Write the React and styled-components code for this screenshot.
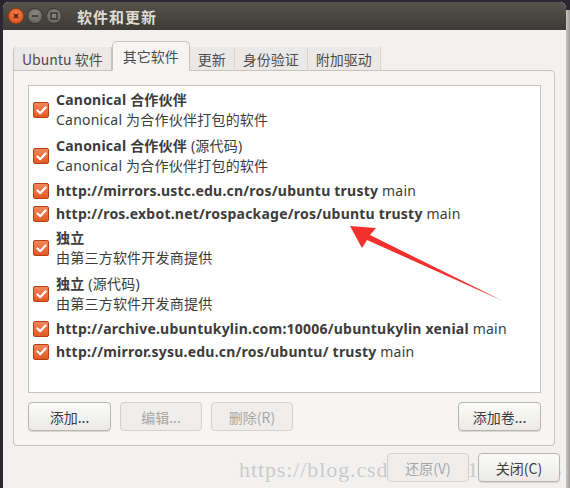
import React from "react";
import styled, { createGlobalStyle } from "styled-components";

const GlobalStyle = createGlobalStyle`
  html, body {
    margin: 0;
    padding: 0;
    background: #2b2631;
    width: 570px;
    height: 488px;
    overflow: hidden;
  }
  body {
    font-family: "Noto Sans", "Noto Sans CJK SC", sans-serif;
    font-size: 14px;
    color: #3c3c3c;
  }
`;

const Screen = styled.div`
  position: relative;
  width: 570px;
  height: 488px;
  padding-top: 2px;
  padding-left: 3px;
  box-sizing: border-box;
  display: flex;
`;

const Window = styled.div`
  width: 563px;
  display: flex;
  flex-direction: column;
  background: #f2f1f0;
  border-radius: 6px 6px 0 0;
  overflow: hidden;
`;

const TitleBar = styled.div`
  height: 28px;
  flex: none;
  display: flex;
  align-items: center;
  padding-left: 5px;
  gap: 3px;
  background: linear-gradient(#56534c, #3d3b36);
`;

const WinButton = styled.span`
  width: 16px;
  height: 16px;
  border-radius: 50%;
  box-sizing: border-box;
  display: flex;
  align-items: center;
  justify-content: center;
  background: ${(p) =>
    p.$close
      ? "radial-gradient(circle at 50% 35%, #f47d4f, #dd4814)"
      : "radial-gradient(circle at 50% 35%, #8a877f, #5f5c55)"};
  border: 1px solid ${(p) => (p.$close ? "#a63a12" : "#3a3833")};
  margin-right: ${(p) => (p.$last ? "12px" : "0")};
`;

const Title = styled.span`
  color: #dfdbd2;
  font-weight: bold;
  font-size: 15px;
  font-family: "Noto Sans CJK SC", sans-serif;
  letter-spacing: 1px;
`;

const Body = styled.div`
  flex: 1;
  display: flex;
  flex-direction: column;
  padding: 12px 11px 0 10px;
`;

const TabStrip = styled.div`
  display: flex;
  align-items: flex-end;
  height: 29px;
  position: relative;
  z-index: 1;
  margin-bottom: -1px;
`;

const Tab = styled.div`
  height: ${(p) => (p.$active ? "30px" : "24px")};
  box-sizing: border-box;
  padding: 0 ${(p) => (p.$active ? "10px" : "8px")};
  display: flex;
  align-items: center;
  font-size: 14px;
  color: #4c4c4c;
  font-family: "Noto Sans CJK SC", sans-serif;
  background: ${(p) => (p.$active ? "#f6f5f4" : "#ebe9e7")};
  border: 1px solid #c6c3bf;
  border-bottom: ${(p) => (p.$active ? "1px solid #f6f5f4" : "1px solid #c6c3bf")};
  border-left: ${(p) => (p.$first || p.$active ? "1px solid #c6c3bf" : "none")};
  border-right: ${(p) => (p.$prevActive ? "1px solid #c6c3bf" : "1px solid #d8d5d2")};
  border-top: ${(p) => (p.$active ? "1px solid #c6c3bf" : "none")};
  border-radius: ${(p) => (p.$active ? "5px 5px 0 0" : p.$first ? "4px 0 0 0" : "0")};
  ${(p) => p.$active && "border-right: 1px solid #c6c3bf;"}
`;

const Panel = styled.div`
  height: 376px;
  box-sizing: border-box;
  border: 1px solid #c6c3bf;
  border-radius: 0 4px 4px 4px;
  background: #f6f5f4;
  padding: 14px 13px 0 14px;
  display: flex;
  flex-direction: column;
`;

const ListBox = styled.div`
  height: 308px;
  box-sizing: border-box;
  background: #ffffff;
  border: 1px solid #c6c3bf;
  padding-top: 1px;
  display: flex;
  flex-direction: column;
`;

const Row = styled.div`
  height: ${(p) => (p.$double ? "46px" : "23px")};
  display: flex;
  align-items: center;
  padding-left: 4px;
  gap: 7px;
`;

const Check = styled.span`
  width: 16px;
  height: 16px;
  flex: none;
  box-sizing: border-box;
  border-radius: 2px;
  border: 1px solid #b8400f;
  background: linear-gradient(#f2875a, #e05a24);
  display: flex;
  align-items: center;
  justify-content: center;
`;

const Lines = styled.div`
  display: flex;
  flex-direction: column;
  line-height: 20px;
  white-space: nowrap;
  letter-spacing: 0.22px;
`;

const Strong = styled.span`
  font-weight: bold;
  color: #3c3c3c;
`;

const Plain = styled.span`
  font-weight: normal;
  color: #3c3c3c;
`;

const ButtonRow = styled.div`
  display: flex;
  align-items: center;
  margin-top: 9px;
  gap: 9px;
`;

const Button = styled.button`
  position: relative;
  z-index: 2;
  width: ${(p) => p.$w || 83}px;
  height: 29px;
  box-sizing: border-box;
  font-family: "Noto Sans CJK SC", sans-serif;
  font-size: 14px;
  color: ${(p) => (p.disabled ? "#a8a6a3" : "#3c3c3c")};
  background: ${(p) =>
    p.disabled ? "#efeeed" : "linear-gradient(#fbfbfa, #ebeae8)"};
  border: 1px solid ${(p) => (p.disabled ? "#d3d1ce" : "#b8b5b1")};
  border-radius: 4px;
  padding: 0;
  margin-left: ${(p) => (p.$push ? "auto" : "0")};
  box-shadow: ${(p) => (p.disabled ? "none" : "0 1px 0 #d9d7d4")};
`;

const Footer = styled.div`
  display: flex;
  justify-content: flex-end;
  gap: 9px;
  padding-top: 7px;
  margin-right: -5px;
`;

const Watermark = styled.div`
  position: absolute;
  z-index: 1;
  left: 239px;
  top: 457px;
  font-family: "Liberation Serif", serif;
  font-size: 22px;
  color: rgba(175, 175, 175, 0.6);
  letter-spacing: 0.9px;
  white-space: nowrap;
  pointer-events: none;
`;

const Arrow = styled.svg`
  position: absolute;
  left: 340px;
  top: 218px;
  pointer-events: none;
`;

const RightEdge = styled.div`
  width: 4px;
  background: linear-gradient(90deg, #c9c7c4, #9c9a97);
  margin-top: 8px;
`;

const Tick = () => (
  <svg width="11" height="9" viewBox="0 0 11 9">
    <path d="M1.5 4.5 L4.2 7.2 L9.5 1.5" fill="none" stroke="#fff" strokeWidth="2.2" strokeLinecap="round" strokeLinejoin="round" />
  </svg>
);

const sources = [
  { title: <Strong>Canonical 合作伙伴</Strong>, sub: "Canonical 为合作伙伴打包的软件" },
  { title: <><Strong>Canonical 合作伙伴</Strong> <Plain>(源代码)</Plain></>, sub: "Canonical 为合作伙伴打包的软件" },
  { title: <><Strong>http://mirrors.ustc.edu.cn/ros/ubuntu trusty</Strong> <Plain>main</Plain></> },
  { title: <><Strong>http://ros.exbot.net/rospackage/ros/ubuntu trusty</Strong> <Plain>main</Plain></> },
  { title: <Strong>独立</Strong>, sub: "由第三方软件开发商提供" },
  { title: <><Strong>独立</Strong> <Plain>(源代码)</Plain></>, sub: "由第三方软件开发商提供" },
  { title: <><Strong>http://archive.ubuntukylin.com:10006/ubuntukylin xenial</Strong> <Plain>main</Plain></> },
  { title: <><Strong>http://mirror.sysu.edu.cn/ros/ubuntu/ trusty</Strong> <Plain>main</Plain></> },
];

const tabs = ["Ubuntu 软件", "其它软件", "更新", "身份验证", "附加驱动"];

export default function App() {
  return (
    <>
      <GlobalStyle />
      <Screen>
        <Window>
          <TitleBar>
            <WinButton $close>
              <svg width="8" height="8" viewBox="0 0 8 8">
                <path d="M2 2 L6 6 M6 2 L2 6" stroke="#3a1a0c" strokeWidth="1.4" />
              </svg>
            </WinButton>
            <WinButton>
              <svg width="8" height="8" viewBox="0 0 8 8">
                <path d="M1 4 H7" stroke="#2e2c28" strokeWidth="1.4" />
              </svg>
            </WinButton>
            <WinButton $last>
              <svg width="8" height="8" viewBox="0 0 8 8">
                <rect x="1" y="1" width="6" height="6" fill="none" stroke="#2e2c28" strokeWidth="1.3" />
              </svg>
            </WinButton>
            <Title>软件和更新</Title>
          </TitleBar>
          <Body>
            <TabStrip>
              {tabs.map((t, i) => (
                <Tab key={t} $first={i === 0} $active={i === 1} $prevActive={i === 0}>
                  {t}
                </Tab>
              ))}
            </TabStrip>
            <Panel>
              <ListBox>
                {sources.map((s, i) => (
                  <Row key={i} $double={!!s.sub}>
                    <Check>
                      <Tick />
                    </Check>
                    <Lines>
                      <span>{s.title}</span>
                      {s.sub && <Plain>{s.sub}</Plain>}
                    </Lines>
                  </Row>
                ))}
              </ListBox>
              <ButtonRow>
                <Button>添加...</Button>
                <Button disabled $w={82}>编辑...</Button>
                <Button disabled $w={82}>删除(R)</Button>
                <Button $push $w={83}>添加卷...</Button>
              </ButtonRow>
            </Panel>
            <Footer>
              <Button disabled $w={82}>还原(V)</Button>
              <Button $w={82}>关闭(C)</Button>
            </Footer>
          </Body>
        </Window>
        <RightEdge />
        <Watermark>https://blog.csdn.net/u013453705</Watermark>
        <Arrow width="170" height="90" viewBox="0 0 170 90">
          <path d="M10 8 L36 10 L30 17 L163 83 L27 22 L22 30 Z" fill="#f2302c" />
        </Arrow>
      </Screen>
    </>
  );
}
